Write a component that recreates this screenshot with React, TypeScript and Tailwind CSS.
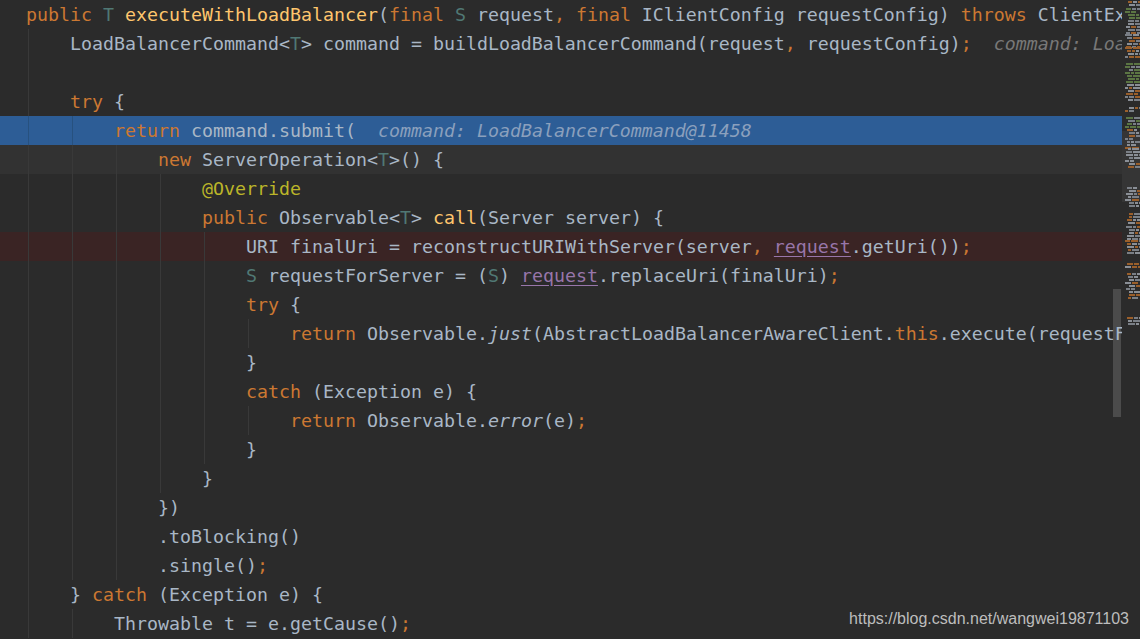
import React from "react";

type Tok = [string, string];

// Darcula token colours
const STYLE: Record<string, string> = {
  d: "text-[#a9b7c6]",
  k: "text-[#cc7832]",
  p: "text-[#cc7832]",
  t: "text-[#507874]",
  m: "text-[#ffc66d]",
  a: "text-[#bbb529]",
  f: "text-[#9876aa] underline decoration-[#9876aa] underline-offset-[3px]",
  i: "text-[#a9b7c6] italic",
  h: "text-[#787878] italic",
  hs: "text-[#8ba0bd] italic",
};

type Line = { guides: number; toks: Tok[]; bg?: string; guide?: string };

const LINES: Line[] = [
  {
    guides: 0,
    toks: [
      ["public", "k"], [" ", "d"], ["T", "t"], [" ", "d"], ["executeWithLoadBalancer", "m"], ["(", "d"],
      ["final", "k"], [" ", "d"], ["S", "t"], [" request", "d"], [",", "p"], [" ", "d"], ["final", "k"],
      [" IClientConfig requestConfig) ", "d"], ["throws", "k"], [" ClientException {", "d"],
    ],
  },
  {
    guides: 1,
    toks: [
      ["LoadBalancerCommand<", "d"], ["T", "t"], ["> command = buildLoadBalancerCommand(request", "d"], [",", "p"],
      [" requestConfig)", "d"], [";", "p"], ["  command: LoadBalancerCommand@11458", "h"],
    ],
  },
  { guides: 1, toks: [] },
  { guides: 1, toks: [["try", "k"], [" {", "d"]] },
  {
    guides: 2,
    bg: "bg-[#2d5d96]",
    guide: "border-[#27517f]",
    toks: [["return", "k"], [" command.submit(", "d"], ["  command: LoadBalancerCommand@11458", "hs"]],
  },
  {
    guides: 3,
    bg: "bg-[#323232]",
    toks: [["new", "k"], [" ServerOperation<", "d"], ["T", "t"], [">() {", "d"]],
  },
  { guides: 4, toks: [["@Override", "a"]] },
  {
    guides: 4,
    toks: [["public", "k"], [" Observable<", "d"], ["T", "t"], ["> ", "d"], ["call", "m"], ["(Server server) {", "d"]],
  },
  {
    guides: 5,
    bg: "bg-[#3a2424]",
    toks: [
      ["URI finalUri = reconstructURIWithServer(server", "d"], [",", "p"], [" ", "d"], ["request", "f"],
      [".getUri())", "d"], [";", "p"],
    ],
  },
  {
    guides: 5,
    toks: [
      ["S", "t"], [" requestForServer = (", "d"], ["S", "t"], [") ", "d"], ["request", "f"],
      [".replaceUri(finalUri)", "d"], [";", "p"],
    ],
  },
  { guides: 5, toks: [["try", "k"], [" {", "d"]] },
  {
    guides: 6,
    toks: [
      ["return", "k"], [" Observable.", "d"], ["just", "i"], ["(AbstractLoadBalancerAwareClient.", "d"],
      ["this", "k"], [".execute(requestForServer", "d"], [",", "p"], [" requestConfig))", "d"], [";", "p"],
    ],
  },
  { guides: 5, toks: [["}", "d"]] },
  { guides: 5, toks: [["catch", "k"], [" (Exception e) {", "d"]] },
  { guides: 6, toks: [["return", "k"], [" Observable.", "d"], ["error", "i"], ["(e)", "d"], [";", "p"]] },
  { guides: 5, toks: [["}", "d"]] },
  { guides: 4, toks: [["}", "d"]] },
  { guides: 3, toks: [["})", "d"]] },
  { guides: 3, toks: [[".toBlocking()", "d"]] },
  { guides: 3, toks: [[".single()", "d"], [";", "p"]] },
  { guides: 1, toks: [["} ", "d"], ["catch", "k"], [" (Exception e) {", "d"]] },
  { guides: 2, toks: [["Throwable t = e.getCause()", "d"], [";", "p"]] },
];

function CodeRow({ line }: { line: Line }) {
  return (
    <div className={`flex h-[29px] shrink-0 items-stretch pl-[26px] ${line.bg ?? ""}`}>
      {Array.from({ length: line.guides }).map((_, i) => (
        <span key={i} className="flex w-[44px] shrink-0">
          <span className={`ml-[2px] border-l ${line.guide ?? "border-[#393939]"}`} />
        </span>
      ))}
      <span className="whitespace-pre leading-[29px]">
        {line.toks.map(([txt, s], i) => (
          <span key={i} className={STYLE[s]}>
            {txt}
          </span>
        ))}
      </span>
    </div>
  );
}

// rough minimap: bands of tiny dashes
const BANDS: [number, number, string][] = [
  [1, 4, "o"], [8, 21, "g"], [23, 33, "y"], [34, 46, "o"], [47, 57, "y"], [63, 82, "g"],
  [84, 100, "o"], [107, 111, "o"], [117, 128, "g"], [129, 147, "o"], [148, 157, "y"],
  [160, 167, "o"], [187, 207, "o"], [213, 224, "y"], [226, 240, "y"], [240, 254, "o"],
  [263, 268, "y"], [273, 298, "o"], [317, 323, "y"],
];

function Minimap() {
  let seed = 11;
  const rnd = () => (seed = (seed * 9301 + 49297) % 233280) / 233280;
  const rects: React.ReactElement[] = [];
  BANDS.forEach(([a, b, kind]) => {
    for (let y = a; y <= b; y += 3) {
      let x = 3 + Math.floor(rnd() * 5);
      const n = 2 + Math.floor(rnd() * 3);
      for (let j = 0; j < n && x < 18; j++) {
        const w = 3 + Math.floor(rnd() * 5);
        const pal =
          kind === "g"
            ? ["#5b7543", "#5b7543", "#7a7f86"]
            : kind === "o"
            ? ["#9a5f2b", "#7a7f86", "#8a8f96"]
            : ["#7a7f86", "#8a8f96", "#9a5f2b"];
        const c = pal[Math.floor(rnd() * pal.length)];
        rects.push(<rect key={`${y}-${j}`} x={x} y={y} width={w} height={2} fill={c} />);
        x += w + 1;
      }
    }
  });
  return (
    <div className="relative w-[18px] shrink-0">
      <div className="absolute left-0 top-[131px] h-[71px] w-[18px] bg-[#353535]" />
      <svg width="18" height="639" className="relative">
        {rects}
      </svg>
    </div>
  );
}

export default function App() {
  return (
    <div className="relative flex h-[639px] w-[1140px] overflow-hidden bg-[#2b2b2b]">
      {/* scrollbar thumb */}
      <div className="absolute left-[1113px] top-[289px] h-[128px] w-[8px] bg-[#4b4b4b]" />
      <div
        className="relative flex w-[1122px] shrink-0 flex-col overflow-hidden text-[18.27px]"
        style={{ fontFamily: '"DejaVu Sans Mono", "Liberation Mono", monospace' }}
      >
        {LINES.map((l, i) => (
          <CodeRow key={i} line={l} />
        ))}
      </div>
      <Minimap />
      <div
        className="absolute right-[11px] top-[610px] text-[16px] leading-[18px] text-[#bdbdbd]"
        style={{ fontFamily: '"Liberation Sans", Arial, sans-serif' }}
      >
        https://blog.csdn.net/wangwei19871103
      </div>
    </div>
  );
}
